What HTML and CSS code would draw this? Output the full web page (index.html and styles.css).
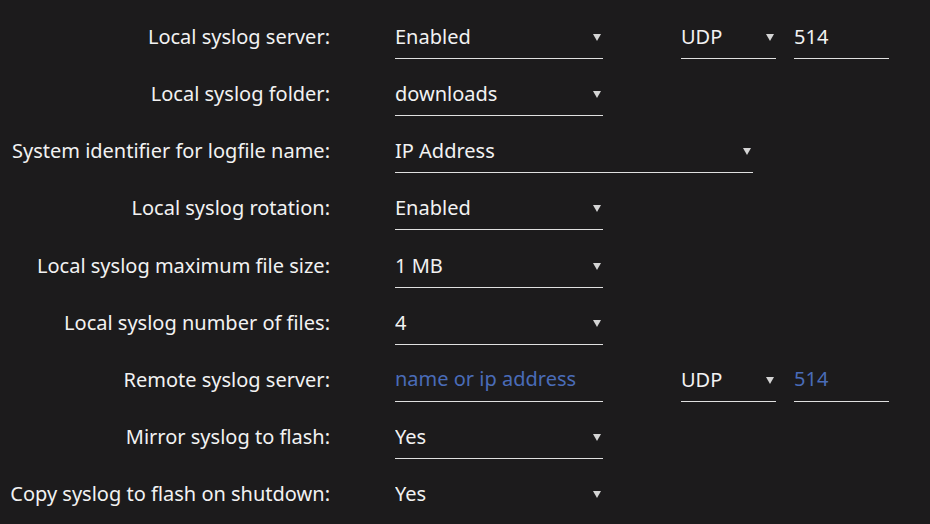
FILE: index.html
```html
<!DOCTYPE html>
<html lang="en">
<head>
    <meta charset="UTF-8">
    <meta name="viewport" content="width=device-width, initial-scale=1.0">
    <title>Syslog Settings</title>
    <link rel="stylesheet" href="styles.css">
</head>
<body>
    <form class="settings">
        <!-- Local server -->
        <div class="row">
            <label class="label">Local syslog server:</label>
            <span class="pick"><select class="field">
                <option>Disabled</option>
                <option selected>Enabled</option>
            </select></span>
            <span class="pick narrow"><select class="field">
                <option selected>UDP</option>
                <option>TCP</option>
                <option>Both</option>
            </select></span>
            <input class="field narrow" type="text" value="514">
        </div>

        <div class="row">
            <label class="label">Local syslog folder:</label>
            <span class="pick"><select class="field">
                <option selected>downloads</option>
                <option>appdata</option>
                <option>system</option>
            </select></span>
        </div>

        <div class="row">
            <label class="label">System identifier for logfile name:</label>
            <span class="pick wide"><select class="field">
                <option>Hostname</option>
                <option selected>IP Address</option>
            </select></span>
        </div>

        <div class="row">
            <label class="label">Local syslog rotation:</label>
            <span class="pick"><select class="field">
                <option>Disabled</option>
                <option selected>Enabled</option>
            </select></span>
        </div>

        <div class="row">
            <label class="label">Local syslog maximum file size:</label>
            <span class="pick"><select class="field">
                <option selected>1 MB</option>
                <option>2 MB</option>
                <option>5 MB</option>
                <option>10 MB</option>
            </select></span>
        </div>

        <div class="row">
            <label class="label">Local syslog number of files:</label>
            <span class="pick"><select class="field">
                <option>1</option>
                <option>2</option>
                <option>3</option>
                <option selected>4</option>
            </select></span>
        </div>

        <!-- Remote server -->
        <div class="row">
            <label class="label">Remote syslog server:</label>
            <input class="field" type="text" placeholder="name or ip address">
            <span class="pick narrow"><select class="field">
                <option selected>UDP</option>
                <option>TCP</option>
            </select></span>
            <input class="field narrow" type="text" placeholder="514">
        </div>

        <div class="row">
            <label class="label">Mirror syslog to flash:</label>
            <span class="pick"><select class="field">
                <option>No</option>
                <option selected>Yes</option>
            </select></span>
        </div>

        <div class="row">
            <label class="label">Copy syslog to flash on shutdown:</label>
            <span class="pick"><select class="field">
                <option>No</option>
                <option selected>Yes</option>
            </select></span>
        </div>
    </form>
</body>
</html>
```

FILE: styles.css
```css
body {
    margin: 0;
    background-color: #1c1b1c;
    color: #f2f2f2;
    font-family: "Noto Sans", "Open Sans", sans-serif;
    font-size: 20px;
}
.row {
    display: flex;
    align-items: flex-start;
    height: 57.125px;
    padding-top: 23px;
    box-sizing: border-box;
}
.label {
    width: 330px;
    margin-right: 65px;
    text-align: right;
    line-height: 28px;
    flex-shrink: 0;
}
.field {
    display: block;
    width: 208px;
    height: 36px;
    margin: 0;
    padding: 0 0 7px 0;
    box-sizing: border-box;
    font-family: inherit;
    font-size: 20px;
    line-height: 28px;
    color: #f2f2f2;
    background: transparent;
    border: none;
    border-bottom: 1px solid #e0e0e0;
    border-radius: 0;
    outline: none;
    -webkit-appearance: none;
    appearance: none;
}
.field::placeholder {
    color: #4a6cb8;
}
input.field {
    padding-bottom: 9px;
    margin-right: 78px;
}
input.narrow {
    width: 95px;
    margin-right: 0;
}
select.field option {
    background-color: #1c1b1c;
}
/* wrapper draws the little down arrow over the select */
.pick {
    position: relative;
    display: block;
}
.pick::after {
    content: "";
    position: absolute;
    right: 2px;
    top: 11px;
    width: 0;
    height: 0;
    border-left: 4px solid transparent;
    border-right: 4px solid transparent;
    border-top: 7px solid #d4d4d4;
    pointer-events: none;
}
.pick.wide .field {
    width: 358px;
}
.pick.narrow {
    margin-right: 18px;
}
.pick.narrow .field {
    width: 95px;
}
.pick:first-of-type:not(.narrow) {
    margin-right: 78px;
}
```
